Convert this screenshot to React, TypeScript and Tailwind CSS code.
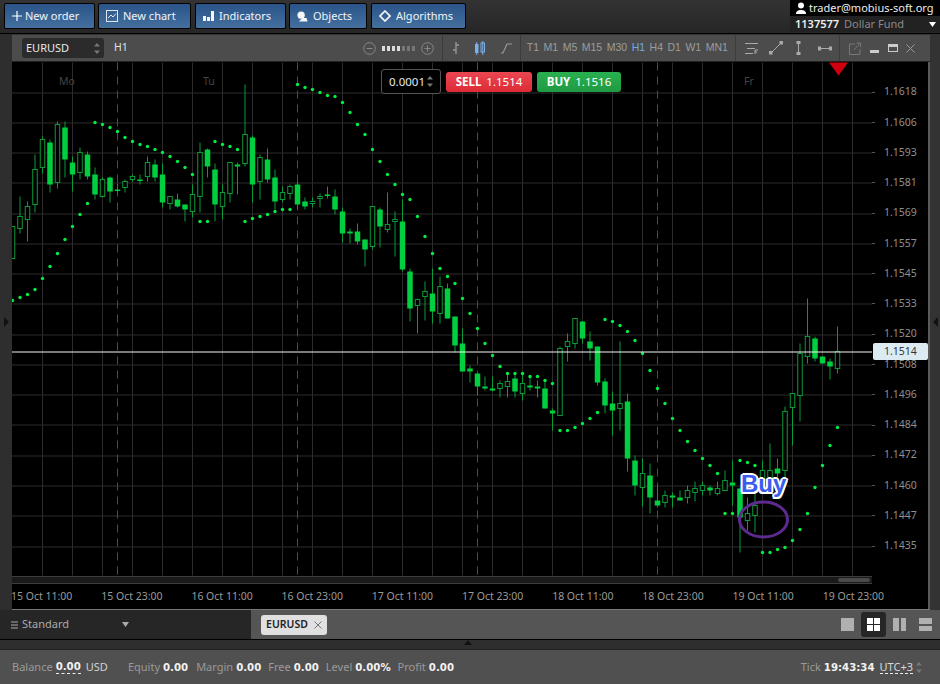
import React from "react";

// high, top, bottom, low, filled(1)/hollow(0) — page-pixel coordinates of the chart drawing
const C: number[][] = [
[226,226,258,258,0],[196,216,228,233,0],[201,206,219,241,0],[154,169,204,212,0],[136,139,167,173,0],[139,142,184,192,1],[121,124,182,188,0],[121,127,159,177,1],[156,162,174,191,1],[147,152,172,179,0],[151,154,176,179,1],[167,174,194,199,1],[177,179,196,197,0],[176,177,191,202,1],[183,189,190,192,1],[179,181,187,192,0],[174,176,179,181,0],[174,179,180,184,1],[156,162,176,181,0],[159,164,177,181,1],[163,174,202,207,1],[196,196,203,209,0],[193,199,206,207,1],[204,204,209,221,1],[184,194,211,217,0],[142,152,196,212,0],[148,149,166,177,1],[163,169,204,221,1],[184,192,206,219,0],[162,162,193,202,0],[162,164,166,194,1],[84,134,163,166,0],[135,137,184,202,1],[154,157,181,199,0],[148,159,179,182,1],[169,177,201,209,1],[186,192,199,202,0],[184,186,193,199,0],[181,184,204,209,1],[197,201,206,209,1],[197,201,203,207,0],[193,196,198,207,0],[186,194,195,198,1],[189,196,209,214,1],[207,211,233,242,1],[228,231,233,243,1],[223,231,241,244,1],[239,239,249,266,1],[206,206,246,249,0],[207,209,226,247,1],[192,224,229,232,0],[211,219,221,256,0],[199,221,269,271,1],[268,271,308,321,1],[298,299,305,333,0],[281,291,296,320,0],[268,293,311,323,1],[276,286,313,323,0],[283,288,318,318,1],[316,316,345,352,1],[328,343,371,371,1],[365,368,371,382,1],[373,373,386,395,1],[376,386,388,390,1],[376,388,390,391,1],[380,383,388,397,0],[373,381,386,397,0],[373,378,391,397,1],[373,383,393,400,0],[376,385,387,390,1],[380,386,388,397,1],[380,388,408,408,1],[408,410,413,430,1],[346,348,415,415,0],[333,341,346,361,0],[318,318,343,348,0],[321,321,338,343,1],[331,341,348,360,1],[346,346,382,385,1],[378,381,405,413,1],[391,403,410,435,1],[341,403,408,430,0],[393,401,458,471,1],[455,460,485,495,1],[458,473,487,506,0],[463,475,497,513,1],[485,500,505,507,1],[490,495,502,507,0],[492,495,497,507,1],[490,497,500,500,1],[485,490,497,503,0],[481,488,492,501,0],[481,485,490,495,0],[485,487,490,495,1],[481,488,493,495,0],[470,480,490,490,0],[460,482,485,505,1],[487,488,517,552,1],[497,513,520,530,0],[493,505,515,532,0],[460,470,480,490,0],[443,470,478,487,0],[458,468,473,487,1],[406,411,470,477,0],[393,393,407,445,0],[343,353,395,421,0],[298,336,356,363,0],[336,338,358,361,1],[356,356,363,363,1],[358,361,366,379,1],[326,351,368,373,0],
];

// dots: [candle index, y]
const D: number[][] = [
[0,300],[1,297],[2,294],[3,289],[4,278],[5,266],[6,253],[7,239],[8,226],[9,214],[10,203],
[11,122],[12,124],[13,127],[14,131],[15,137],[16,141],[17,144],[18,146],[19,149],[20,152],[21,156],[22,161],[23,167],[24,174],
[25,221],[26,221],[27,141],[28,144],[29,146],[30,149],[31,221],[32,218],[33,216],[34,214],[35,211],[36,209],[37,209],
[38,84],[39,87],[40,89],[41,92],[42,95],[43,96],[44,102],[45,112],[46,124],[47,134],[48,149],[49,161],[50,174],[51,184],[52,194],[53,199],[54,216],[55,236],[56,253],[57,268],[58,276],[59,283],[60,298],[61,313],[62,328],[63,343],[64,355],[65,366],[66,373],[67,373],[68,373],[69,376],[70,376],[71,380],[72,383],
[73,430],[74,430],[75,427],[76,423],[77,418],[78,412],[79,319],[80,321],[81,325],[82,331],[83,340],[84,353],[85,370],[86,388],[87,403],[88,418],[89,430],[90,441],[91,450],[92,458],[93,465],[94,473],[95,513],[96,513],[97,460],[98,462],[99,465],[100,552],[101,552],[102,549],[103,547],[104,540],[105,529],[106,513],[107,487],[108,465],[109,445],[110,427],
];

const PRICES = ["1.1618","1.1606","1.1593","1.1581","1.1569","1.1557","1.1545","1.1533","1.1520","1.1508","1.1496","1.1484","1.1472","1.1460","1.1447","1.1435"];
const DATES = ["15 Oct 11:00","15 Oct 23:00","16 Oct 11:00","16 Oct 23:00","17 Oct 11:00","17 Oct 23:00","18 Oct 11:00","18 Oct 23:00","19 Oct 11:00","19 Oct 23:00"];
const FRAMES = ["T1","M1","M5","M15","M30","H1","H4","D1","W1","MN1"];
const cx = (i: number) => 12.5 + i * 7.5;

function Chart() {
  const vert: number[] = [];
  for (let x = 42; x < 872; x += 30) vert.push(x);
  const horiz = PRICES.map((_, i) => 91.5 + i * 30.27);
  return (
    <svg className="absolute inset-0 w-full h-full" viewBox="12 62 860 513">
      {vert.map((x) => <line key={x} x1={x + 0.5} x2={x + 0.5} y1={62} y2={575} stroke="#2c2c2c" />)}
      {horiz.map((y) => <line key={y} x1={12} x2={872} y1={Math.round(y) + 0.5} y2={Math.round(y) + 0.5} stroke="#2c2c2c" />)}
      {[117, 297, 477, 657].map((x) => <line key={x} x1={x + 0.5} x2={x + 0.5} y1={62} y2={575} stroke="#4c4c4c" strokeDasharray="8 6" />)}
      {C.map(([h, t, b, l, f], i) => {
        const x = cx(i);
        return (
          <g key={i}>
            <line x1={x} x2={x} y1={h} y2={l} stroke="#0b9a38" strokeWidth={1} />
            {f ? (
              <rect x={x - 2.75} y={t} width={5.5} height={Math.max(b - t, 1.5)} fill="#00cf3f" />
            ) : (
              <rect x={x - 2.25} y={t} width={4.5} height={Math.max(b - t, 1.5)} fill="#000" stroke="#0b9a38" />
            )}
          </g>
        );
      })}
      {D.map(([i, y]) => <circle key={i} cx={cx(i)} cy={y} r={1.7} fill="#00ee44" />)}
      <line x1={12} x2={872} y1={351.5} y2={351.5} stroke="#f5f5f5" />
      <polygon points="829,62 848,62 838.5,75" fill="#d0000f" />
      <ellipse cx={763.5} cy={519} rx={24} ry={17.5} fill="none" stroke="#5e2a8f" strokeWidth={3} />
    </svg>
  );
}

function NavBtn({ cls, icon, label }: { cls: string; icon: React.ReactNode; label: string }) {
  return (
    <button className={`${cls} h-[26px] flex items-center pl-[7px] rounded-[2px] border border-black bg-gradient-to-b from-[#2a5488] to-[#44709f] text-[#f0f4f8] text-[11px]`}>
      {icon}
      <span>{label}</span>
    </button>
  );
}

const Stat = ({ k, v, cls }: { k: string; v: string; cls: string }) => (
  <span className={cls}>
    <span className="text-[#9a9a9a]">{k}</span>
    <b className="ml-[3px] text-[#f2f2f2] font-['DejaVu_Sans',sans-serif] text-[10.2px]">{v}</b>
  </span>
);

const Stepper = () => (
  <svg width="6" height="11" viewBox="0 0 6 11" className="shrink-0">
    <polygon points="3,0 6,3.5 0,3.5" fill="#777" />
    <polygon points="3,11 6,7.5 0,7.5" fill="#777" />
  </svg>
);

export default function App() {
  return (
    <div className="w-[940px] h-[684px] overflow-hidden flex flex-col bg-[#333] font-['Noto_Sans',sans-serif] text-[11px] select-none">
      {/* top bar */}
      <header className="h-[34px] shrink-0 flex bg-gradient-to-b from-[#333] to-[#262626] border-b border-black">
        <nav className="flex pl-[4px] pt-[3px]">
          <NavBtn cls="w-[91px]" label="New order" icon={
            <svg className="mr-[3px]" width="10" height="10" viewBox="0 0 10 10"><path d="M5 0v10M0 5h10" stroke="#fff" strokeWidth="1.2" /></svg>} />
          <NavBtn cls="w-[93px] ml-[3px]" label="New chart" icon={
            <svg className="mr-[5px]" width="12" height="12" viewBox="0 0 12 12" fill="none" stroke="#dfe6ee"><rect x=".5" y=".5" width="11" height="11" /><path d="M2 8l3-3 2 2 3-3.5" /></svg>} />
          <NavBtn cls="w-[91px] ml-[4px]" label="Indicators" icon={
            <svg className="mr-[5px]" width="11" height="10" viewBox="0 0 11 10" fill="#f4f6f8"><rect y="5" width="3" height="5" /><rect x="4" y="6" width="3" height="4" /><rect x="8" y="0" width="3" height="10" /></svg>} />
          <NavBtn cls="w-[78px] ml-[3px]" label="Objects" icon={
            <svg className="mr-[5px]" width="11" height="11" viewBox="0 0 12 11" fill="#f4f6f8"><circle cx="4.5" cy="4" r="4" /><path d="M2 11l4-4h4.5l1 4z" /></svg>} />
          <NavBtn cls="w-[95px] ml-[4px]" label="Algorithms" icon={
            <svg className="mr-[5px]" width="12" height="12" viewBox="0 0 12 12" fill="none" stroke="#f4f6f8" strokeWidth="1.7"><path d="M6 1l5 5-5 5-5-5z" /></svg>} />
        </nav>
        <div className="ml-auto w-[150px] h-[32px] bg-black flex flex-col">
          <div className="h-[16px] flex items-center pl-[5px] gap-[2px] text-[#eee] text-[11px] whitespace-nowrap">
            <svg width="12" height="12" viewBox="0 0 12 12" fill="#fff"><circle cx="6" cy="3.5" r="3" /><path d="M1 12c0-3 2-4 5-4s5 1 5 4z" /></svg>
            <span>trader@mobius-soft.org</span>
          </div>
          <div className="h-[16px] flex items-center pl-[5px] bg-[#222] text-[11px]">
            <b className="font-semibold text-[#eee]">1137577</b>
            <span className="ml-[5px] text-[#8a8a8a]">Dollar Fund</span>
            <svg className="ml-auto mr-[4px]" width="7" height="5" viewBox="0 0 7 5"><polygon points="0,0 7,0 3.5,5" fill="#fff" /></svg>
          </div>
        </div>
      </header>

      {/* workspace */}
      <div className="flex-1 min-h-0 flex">
        <aside className="w-[12px] shrink-0 bg-[#2e2e2e] flex items-center justify-center">
          <svg width="5" height="10" viewBox="0 0 5 10"><polygon points="0,0 5,5 0,10" fill="#111" /></svg>
        </aside>

        <section className="w-[918px] shrink-0 flex flex-col mt-[1px] border-b border-[#777]">
          {/* chart toolbar */}
          <div className="h-[27px] shrink-0 flex items-center bg-[#4c4c4c] border-b border-[#222] text-[#9d9d9d] text-[10.5px]">
            <div className="ml-[10px] w-[82px] h-[20px] rounded-[3px] bg-[#2b2b2b] flex items-center pl-[4px] pr-[4px] justify-between text-[#e8e8e8] text-[11px]">
              <span>EURUSD</span><Stepper />
            </div>
            <span className="ml-[10px] text-[#e0e0e0]">H1</span>
            <svg className="ml-[235px]" width="13" height="13" viewBox="0 0 13 13" fill="none" stroke="#888"><circle cx="6.5" cy="6.5" r="5.8" /><path d="M3.5 6.5h6" /></svg>
            <div className="ml-[6px] flex gap-[2px]">
              {[1, 1, 1, 1, 0, 0, 0].map((o, i) => (
                <span key={i} className={o ? "w-[3px] h-[5px] bg-[#ddd]" : "w-[3px] h-[5px] bg-[#777]"} />
              ))}
            </div>
            <svg className="ml-[6px]" width="13" height="13" viewBox="0 0 13 13" fill="none" stroke="#888"><circle cx="6.5" cy="6.5" r="5.8" /><path d="M3.5 6.5h6M6.5 3.5v6" /></svg>
            <span className="ml-[8px] w-px h-[26px] bg-[#3c3c3c]" />
            <svg className="ml-[9px]" width="8" height="14" viewBox="0 0 8 14" fill="none" stroke="#999"><path d="M4 1v12M4 4h3M1 9h3" strokeWidth="1.3" /></svg>
            <svg className="ml-[15px]" width="10" height="14" viewBox="0 0 10 14" fill="#7db0e8"><rect x="0" y="3" width="3.5" height="9" /><rect x="1.25" y="1" width="1" height="13" /><rect x="6" y="2" width="3.5" height="9" fill="none" stroke="#7db0e8" /><rect x="7.25" y="0" width="1" height="14" /></svg>
            <svg className="ml-[15px]" width="14" height="14" viewBox="0 0 14 14" fill="none" stroke="#999" strokeWidth="1.2"><path d="M1 12h2l4-9h5" /></svg>
            <span className="ml-[6px] w-px h-[26px] bg-[#3c3c3c]" />
            <div className="ml-[6px] flex gap-[4.5px] font-['Liberation_Sans',sans-serif]">
              {FRAMES.map((f) => <span key={f} className={f === "H1" ? "text-[#6fa8e8]" : ""}>{f}</span>)}
            </div>
            <span className="ml-[7px] w-px h-[26px] bg-[#3c3c3c]" />
            <svg className="ml-[8px]" width="14" height="13" viewBox="0 0 14 13" fill="none" stroke="#aaa"><path d="M1 1.5h13M3 6.5h8M1 11.5h8M11 12V8h3M11 10h2" /></svg>
            <svg className="ml-[11px]" width="14" height="14" viewBox="0 0 14 14" fill="#aaa" stroke="#aaa"><path d="M2 12L12 2" /><rect x="0.5" y="10.5" width="2.5" height="2.5" /><rect x="11" y="0.5" width="2.5" height="2.5" /></svg>
            <svg className="ml-[13px]" width="5" height="14" viewBox="0 0 5 14" fill="#aaa" stroke="#aaa"><path d="M2.5 1v12" /><rect x="1" y="0.5" width="3" height="2" /><rect x="1" y="11.5" width="3" height="2" /></svg>
            <svg className="ml-[17.5px]" width="14" height="5" viewBox="0 0 14 5" fill="#aaa" stroke="#aaa"><path d="M1 2.5h12" /><rect x="0.5" y="1" width="2" height="3" /><rect x="11.5" y="1" width="2" height="3" /></svg>
            <span className="ml-[7px] w-px h-[26px] bg-[#3c3c3c]" />
            <svg className="ml-[9px]" width="12" height="13" viewBox="0 0 12 13" fill="none" stroke="#777"><path d="M6 2H.5v10.5H11V7M5 8l6-7M7.5 1H11.5V5" /></svg>
            <span className="ml-[9px] w-[9px] h-[3px] mt-[6px] bg-[#ccc]" />
            <span className="ml-[9px] w-[10px] h-[8px] border border-[#ccc] border-t-[3px]" />
            <svg className="ml-[8px]" width="9" height="9" viewBox="0 0 9 9" stroke="#999"><path d="M.5.5l8 8M8.5.5l-8 8" /></svg>
          </div>

          {/* chart body */}
          <div className="flex-1 min-h-0 flex flex-col bg-black">
            <div className="flex-1 min-h-0 flex">
              <div className="w-[860px] shrink-0 flex flex-col">
                <div className="relative flex-1 min-h-0">
                  <Chart />
                  <span className="absolute left-[47px] top-[12px] text-[#454545] text-[10.5px]">Mo</span>
                  <span className="absolute left-[191px] top-[12px] text-[#454545] text-[10.5px]">Tu</span>
                  <span className="absolute left-[732px] top-[12px] text-[#454545] text-[10.5px]">Fr</span>
                  <div className="absolute left-[369px] top-[7px] flex gap-[5px] items-center">
                    <div className="w-[60px] h-[25px] bg-black border border-[#555] rounded-[3px] flex items-center justify-between px-[7px] text-[#e8e8e8] text-[11.5px]">
                      <span>0.0001</span><Stepper />
                    </div>
                    <div className="w-[86px] h-[20px] rounded-[3px] bg-gradient-to-b from-[#ea4652] to-[#dc2a35] flex items-center justify-center gap-[5px] text-[#fff] text-[11.5px]">
                      <b>SELL</b><span>1.1514</span>
                    </div>
                    <div className="w-[84px] h-[20px] rounded-[3px] bg-gradient-to-b from-[#2ab050] to-[#1f9a42] flex items-center justify-center gap-[5px] text-[#fff] text-[11.5px]">
                      <b>BUY</b><span>1.1516</span>
                    </div>
                  </div>
                  <span className="absolute left-[729px] top-[406px] text-[24px] leading-[32px] font-bold text-[#3a5cf0] [text-shadow:2px_0_0_#fff,-2px_0_0_#fff,0_2px_0_#fff,0_-2px_0_#fff,1.5px_1.5px_0_#fff,-1.5px_-1.5px_0_#fff,1.5px_-1.5px_0_#fff,-1.5px_1.5px_0_#fff] font-['Liberation_Sans',sans-serif]">Buy</span>
                </div>
                <div className="h-[8px] shrink-0 bg-[#1a1a1a] border-y border-[#3d3d3d] flex items-center justify-end pr-[2px]">
                  <span className="w-[32px] h-[4px] rounded-full bg-[#4a4a4a]" />
                </div>
              </div>
              <div className="relative w-[58px] shrink-0 pt-[15px] border-r-2 border-r-[#5a5a5a] text-[#8f8f8f] text-[10.5px]">
                {PRICES.map((p) => (
                  <div key={p} className="h-[30.27px] flex items-center">
                    <span className="w-[3px] h-px bg-[#555] mr-[9px]" />
                    <span>{p}</span>
                  </div>
                ))}
                <div className="absolute left-[1px] right-0 top-[281px] h-[17px] bg-[#dcebf1] rounded-[2px] flex items-center pl-[11px] text-[#333] text-[10.5px]">1.1514</div>
              </div>
            </div>
            <div className="h-[25px] shrink-0 flex items-center border-r-2 border-[#5a5a5a] text-[#9a9a9a] text-[10.5px] whitespace-nowrap">
              <div className="flex -ml-[1px]">
                {DATES.map((d) => <span key={d} className="w-[90.2px] shrink-0">{d}</span>)}
              </div>
            </div>
          </div>
        </section>

        <aside className="flex-1 bg-[#333] flex items-center justify-center">
          <svg width="5" height="10" viewBox="0 0 5 10"><polygon points="5,0 0,5 5,10" fill="#111" /></svg>
        </aside>
      </div>

      {/* tabs */}
      <div className="h-[30px] shrink-0 flex bg-[#555] border-b border-black">
        <div className="w-[251px] shrink-0 bg-[#262626] flex items-center pl-[11px] text-[#aaa] text-[11px]">
          <svg width="7" height="8" viewBox="0 0 7 8" stroke="#aaa"><path d="M0 1h7M0 4h7M0 7h7" /></svg>
          <span className="ml-[4px]">Standard</span>
          <svg className="ml-[53px]" width="7" height="5" viewBox="0 0 7 5"><polygon points="0,0 7,0 3.5,5" fill="#aaa" /></svg>
        </div>
        <div className="ml-[10px] mt-[5px] w-[66px] h-[20px] rounded-[3px] bg-[#e0e0e0] flex items-center justify-center gap-[6px] text-[#222] text-[10.5px] font-semibold">
          <span>EURUSD</span>
          <svg width="8" height="8" viewBox="0 0 8 8" stroke="#777"><path d="M.5.5l7 7M7.5.5l-7 7" /></svg>
        </div>
        <div className="ml-auto flex items-center pr-[8px]">
          <span className="w-[13px] h-[13px] bg-[#b0b0b0] mr-[7px]" />
          <span className="w-[25px] h-[25px] rounded-[3px] bg-[#262626] grid grid-cols-2 gap-px p-[6px]">
            <i className="bg-white" /><i className="bg-white" /><i className="bg-white" /><i className="bg-white" />
          </span>
          <span className="ml-[7px] w-[13px] h-[13px] grid grid-cols-2 gap-[2px]"><i className="bg-[#b0b0b0]" /><i className="bg-[#b0b0b0]" /></span>
          <span className="ml-[13px] w-[13px] h-[13px] grid grid-rows-2 gap-[2px]"><i className="bg-[#b0b0b0]" /><i className="bg-[#b0b0b0]" /></span>
        </div>
      </div>

      {/* resize strip */}
      <div className="h-[10px] shrink-0 bg-[#2e2e2e] border-b border-[#222] flex justify-center">
        <svg className="ml-[-4px]" width="8" height="5" viewBox="0 0 8 5"><polygon points="0,5 8,5 4,0" fill="#111" /></svg>
      </div>

      {/* status bar */}
      <footer className="h-[34px] shrink-0 flex items-center bg-[#505050] pl-[12px] pr-[18px] text-[11px] whitespace-nowrap">
        <span className="text-[#9a9a9a]">Balance</span>
        <b className="ml-[3px] text-[#f2f2f2] border-b border-dashed border-[#eee] leading-[13px] font-['DejaVu_Sans',sans-serif] text-[10.2px]">0.00</b>
        <span className="ml-[5px] text-[#d0d0d0]">USD</span>
        <Stat cls="ml-[20px]" k="Equity" v="0.00" />
        <Stat cls="ml-[8px]" k="Margin" v="0.00" />
        <Stat cls="ml-[7px]" k="Free" v="0.00" />
        <Stat cls="ml-[7px]" k="Level" v="0.00%" />
        <Stat cls="ml-[7px]" k="Profit" v="0.00" />
        <Stat cls="ml-auto" k="Tick" v="19:43:34" />
        <span className="ml-[5px] text-[#d8d8d8] border-b border-dashed border-[#eee] leading-[13px]">UTC+3</span>
        <span className="ml-[3px]"><Stepper /></span>
      </footer>
    </div>
  );
}
